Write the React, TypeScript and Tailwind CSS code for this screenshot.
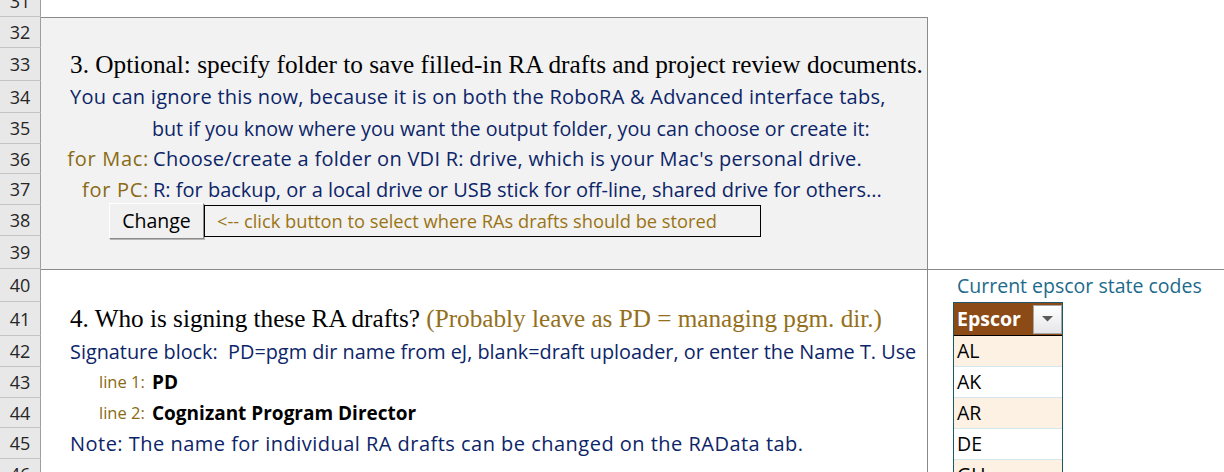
import React from 'react';

const sans = { fontFamily: '"Open Sans", Lato, sans-serif' };
const serif = { fontFamily: '"Liberation Serif", "DejaVu Serif", serif' };

// row number + height in px (boundaries read off the sheet)
const rows: { n: number; h: number }[] = [
  { n: 31, h: 31 },
  { n: 32, h: 31 },
  { n: 33, h: 33 },
  { n: 34, h: 32 },
  { n: 35, h: 31 },
  { n: 36, h: 30 },
  { n: 37, h: 31 },
  { n: 38, h: 31 },
  { n: 39, h: 33 },
  { n: 40, h: 33 },
  { n: 41, h: 34 },
  { n: 42, h: 31 },
  { n: 43, h: 31 },
  { n: 44, h: 30 },
  { n: 45, h: 31 },
  { n: 46, h: 31 },
];

const codes = ['AL', 'AK', 'AR', 'DE', 'GU'];

function RowHeaders() {
  return (
    <div className="w-[41px] shrink-0 flex flex-col">
      {rows.map((r) => (
        <div
          key={r.n}
          style={{ height: r.h, ...sans }}
          className="flex items-center justify-center border-b border-r border-b-[#c4c4c4] border-r-[#9e9e9e] bg-[#e8e8e8] text-[18px] text-[#262626] leading-none"
        >
          {r.n}
        </div>
      ))}
    </div>
  );
}

function Label({ children }: { children: React.ReactNode }) {
  return <span className="w-[112px] shrink-0 text-right pr-[4px] tracking-[0.7px] text-[#8a6a14]">{children}</span>;
}

export default function App() {
  return (
    <div className="w-[1224px] h-[472px] overflow-hidden bg-white">
      <div className="flex -mt-[14px]">
        <RowHeaders />

        <div className="flex-1 flex flex-col">
          {/* row 31 */}
          <div className="h-[31px]" />

          {/* optional output folder block */}
          <div
            style={sans}
            className="w-[887px] h-[252px] bg-[#f2f2f2] border-t border-r border-[#8a8a8a] flex flex-col text-[20px] text-[#0c2568]"
          >
            <div className="h-[30px]" />
            <div style={serif} className="h-[33px] flex items-center pl-[29px] text-[25.3px] text-black">
              3. Optional: specify folder to save filled-in RA drafts and project review documents.
            </div>
            <div className="h-[32px] flex items-center pl-[29px] tracking-[0.25px]">
              You can ignore this now, because it is on both the RoboRA &amp; Advanced interface tabs,
            </div>
            <div className="h-[31px] flex items-center pl-[111px] text-[19.7px]">
              but if you know where you want the output folder, you can choose or create it:
            </div>
            <div className="h-[30px] flex items-center">
              <Label>for Mac:</Label>
              <span className="tracking-[0.28px]">Choose/create a folder on VDI R: drive, which is your Mac's personal drive.</span>
            </div>
            <div className="h-[31px] flex items-center">
              <Label>for PC:</Label>
              <span>R: for backup, or a local drive or USB stick for off-line, shared drive for others...</span>
            </div>
            <div className="h-[31px] flex items-center pl-[68px]">
              <button className="w-[95px] h-[36px] bg-[#f0f0f0] border border-t-white border-l-white border-r-[#8c8c8c] border-b-[#8c8c8c] shadow-[1px_1px_0_#b5b5b5] text-black text-[19.5px] leading-none">
                Change
              </button>
              <div className="w-[557px] h-[32px] border border-black bg-[#f2f2f2] flex items-center pl-[12px] text-[18.3px] text-[#9a7414]">
                &lt;-- click button to select where RAs drafts should be stored
              </div>
            </div>
            <div className="flex-1" />
          </div>

          {/* signature block + epscor list */}
          <div style={sans} className="flex border-t border-[#8a8a8a]">
            <div className="w-[887px] shrink-0 border-r border-[#8a8a8a] flex flex-col text-[20px] text-[#0c2568]">
              <div className="h-[32px]" />
              <div style={serif} className="h-[34px] flex items-center pl-[29px] text-[25.2px] text-black">
                4. Who is signing these RA drafts?&nbsp;
                <span className="text-[#946f1c]">(Probably leave as PD = managing pgm. dir.)</span>
              </div>
              <div className="h-[31px] flex items-center pl-[29px] whitespace-pre text-[19.85px]">
                Signature block:  PD=pgm dir name from eJ, blank=draft uploader, or enter the Name T. Use
              </div>
              <div className="h-[31px] flex items-center">
                <span className="w-[111px] pl-[58px] shrink-0 text-[16.5px] text-[#8a6a14]">line 1:</span>
                <span className="font-bold text-[19px] text-black">PD</span>
              </div>
              <div className="h-[30px] flex items-center">
                <span className="w-[111px] pl-[58px] shrink-0 text-[16.5px] text-[#8a6a14]">line 2:</span>
                <span className="font-bold text-[19px] text-black">Cognizant Program Director</span>
              </div>
              <div className="h-[31px] flex items-center pl-[29px] tracking-[0.48px]">
                Note: The name for individual RA drafts can be changed on the RAData tab.
              </div>
              <div className="h-[40px]" />
            </div>

            <div className="flex-1 flex flex-col pl-[25px]">
              <div className="h-[32px] flex items-center pl-[4px] text-[19.5px] text-[#1d6a8a]">
                Current epscor state codes
              </div>
              <div className="w-[110px] border-l border-r border-t border-[#1f5864] flex flex-col">
                <div className="h-[33px] bg-[#8b4a16] flex items-center justify-between border-b border-black">
                  <span className="pl-[3px] text-white font-bold text-[19.5px]">Epscor</span>
                  <span className="w-[29px] h-[29px] bg-gradient-to-b from-white to-[#e6e6ea] border border-[#a6a6a6] flex items-center justify-center">
                    <svg width="11" height="6" viewBox="0 0 11 6">
                      <path d="M0 0 H11 L5.5 5.5 Z" fill="#5a5a5a" />
                    </svg>
                  </span>
                </div>
                {codes.map((c, i) => (
                  <div
                    key={c}
                    className={`h-[31px] flex items-center pl-[3px] border-b border-[#d3e6ee] text-[19.5px] text-black ${
                      i % 2 === 0 ? 'bg-[#fdf1e3]' : 'bg-white'
                    }`}
                  >
                    {c}
                  </div>
                ))}
              </div>
            </div>
          </div>
        </div>
      </div>
    </div>
  );
}
